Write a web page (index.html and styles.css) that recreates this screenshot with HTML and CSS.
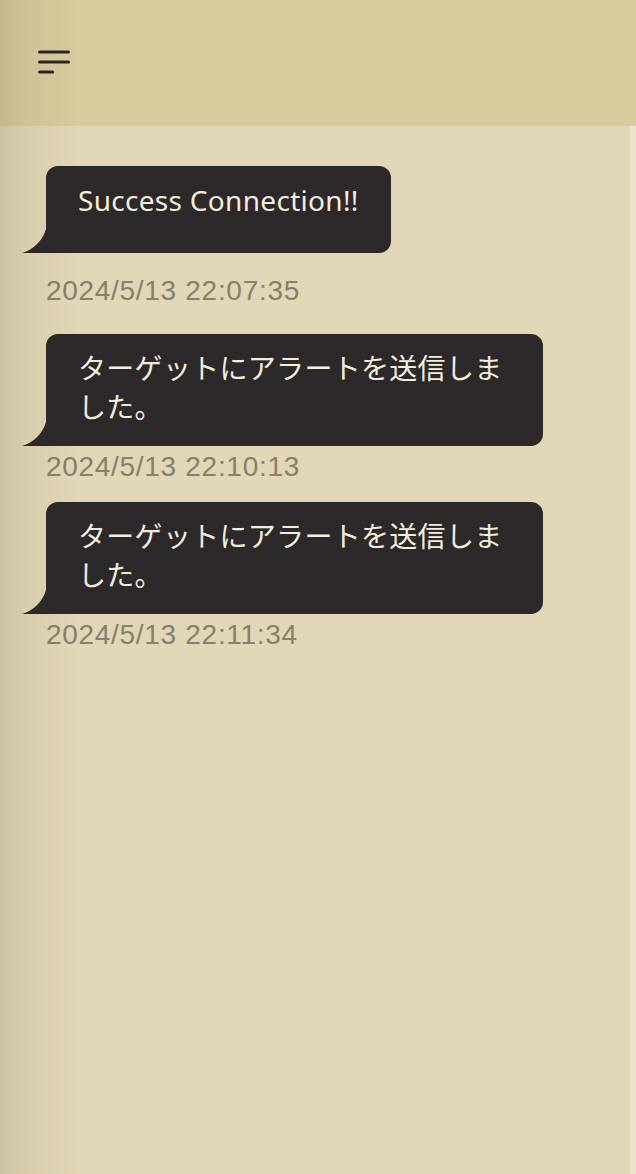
FILE: index.html
```html
<!DOCTYPE html>
<html lang="ja">
<head>
<meta charset="utf-8">
<title>Chat</title>
<link rel="stylesheet" href="styles.css">
</head>
<body>
<header class="topbar">
  <button class="menu" aria-label="menu">
    <svg width="32" height="32" viewBox="0 0 32 32" fill="none" stroke="#2a2628" stroke-width="3.2" stroke-linecap="round">
      <line x1="1.6" y1="6" x2="30.4" y2="6"/>
      <line x1="1.6" y1="16" x2="30.4" y2="16"/>
      <line x1="1.6" y1="26" x2="14.6" y2="26"/>
    </svg>
  </button>
</header>
<main class="chat">
  <div class="msg msg--first">
    <div class="bubble">Success Connection!!</div>
    <div class="time">2024/5/13 22:07:35</div>
  </div>
  <div class="msg">
    <div class="bubble">ターゲットにアラートを送信しました。</div>
    <div class="time">2024/5/13 22:10:13</div>
  </div>
  <div class="msg">
    <div class="bubble">ターゲットにアラートを送信しました。</div>
    <div class="time">2024/5/13 22:11:34</div>
  </div>
</main>
</body>
</html>
```
FILE: styles.css
```css
html, body {
  margin: 0;
  padding: 0;
}
body {
  background: #e1d6b5;
  font-family: "Noto Sans", "Noto Sans CJK JP", sans-serif;
  min-height: 100vh;
  display: flex;
  flex-direction: column;
}
body::before {
  content: "";
  position: fixed;
  left: 0;
  top: 0;
  bottom: 0;
  width: 80px;
  background: linear-gradient(to right, rgba(40, 30, 0, 0.11) 0, rgba(40, 30, 0, 0.045) 28px, rgba(40, 30, 0, 0) 80px);
  pointer-events: none;
}
.topbar {
  height: 126px;
  background: #d8cb9e;
  display: flex;
  align-items: center;
  padding: 0 0 2px 38px;
  box-sizing: border-box;
  flex: none;
}
.menu {
  border: 0;
  padding: 0;
  background: none;
  display: flex;
}
.chat {
  flex: 1;
  padding: 40px 0 40px 46px;
  border-right: 6px solid #ebe3cf;
  display: flex;
  flex-direction: column;
  align-items: flex-start;
  gap: 19px;
}
.msg {
  display: flex;
  flex-direction: column;
  align-items: flex-start;
}
.bubble {
  position: relative;
  box-sizing: border-box;
  max-width: 497px;
  background: #2d292b;
  color: #f3eddc;
  border-radius: 12px 12px 12px 0;
  padding: 15px 32px 19px 32px;
  font-size: 28px;
  letter-spacing: 0.3px;
  line-height: 39px;
}
.bubble::before {
  content: "";
  position: absolute;
  left: -24px;
  bottom: 0;
  width: 24px;
  height: 24px;
  background: radial-gradient(circle at -10px -10px, rgba(45, 41, 43, 0) 35px, #2d292b 35.8px);
}
.time {
  font-family: "Liberation Sans", Arial, sans-serif;
  font-size: 28px;
  letter-spacing: 0.7px;
  line-height: 33px;
  color: #86806f;
  margin-top: 4px;
}
.msg--first {
  margin-bottom: 8px;
}
.msg--first .bubble {
  min-height: 87px;
}
.msg--first .time {
  margin-top: 21px;
}
```
